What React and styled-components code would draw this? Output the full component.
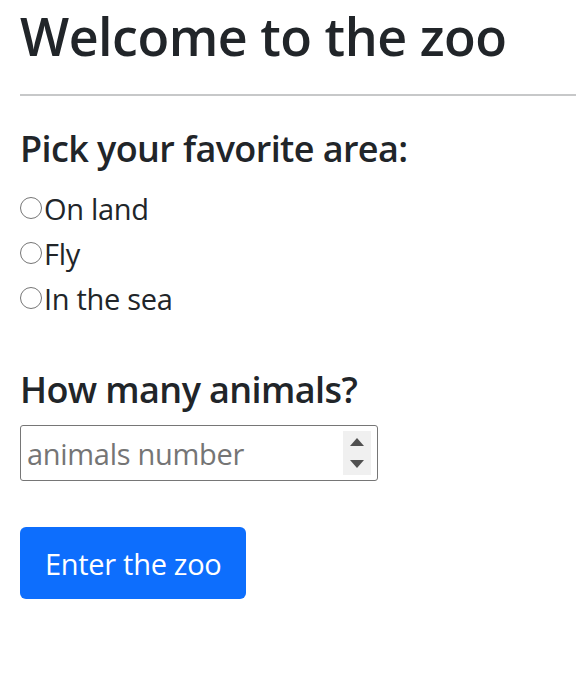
import styled, { createGlobalStyle } from "styled-components";

const GlobalStyle = createGlobalStyle`
  body {
    margin: 0;
    background: #fff;
    color: #212529;
    font-family: "Open Sans", "Noto Sans", sans-serif;
  }
`;

const Page = styled.div`
  padding: 0 0 40px 20px;
`;

const Title = styled.h1`
  margin: 0;
  padding-top: 5px;
  font-size: 52px;
  font-weight: 600;
  line-height: 62px;
  letter-spacing: -0.5px;
`;

const Rule = styled.hr`
  margin: 27px 0 28px;
  border: 0;
  border-top: 2px solid rgba(33, 37, 41, 0.25);
`;

const Question = styled.h3`
  margin: 0 0 ${({ $gap }) => $gap}px;
  font-size: 36px;
  font-weight: 600;
  line-height: 50px;
  letter-spacing: -0.6px;
`;

const Options = styled.div`
  display: flex;
  flex-direction: column;
  margin-bottom: 44px;
`;

const Option = styled.label`
  display: flex;
  align-items: center;
  height: 45px;
  font-size: 29px;
  letter-spacing: -0.3px;
`;

const Radio = styled.input.attrs({ type: "radio" })`
  appearance: none;
  box-sizing: border-box;
  width: 22px;
  height: 22px;
  margin: 0 2px 2px 0;
  border: 1.8px solid #767676;
  border-radius: 50%;
  background: #fff;
`;

const NumberBox = styled.div`
  display: flex;
  align-items: center;
  box-sizing: border-box;
  width: 358px;
  height: 56px;
  padding: 0 6px 0 6px;
  border: 1px solid #767676;
  border-radius: 3px;
`;

const NumberInput = styled.input.attrs({ type: "number" })`
  flex: 1;
  min-width: 0;
  border: 0;
  outline: none;
  padding: 0;
  font-family: inherit;
  font-size: 29px;
  letter-spacing: -0.3px;
  color: #212529;
  &::placeholder {
    color: #757575;
  }
  &::-webkit-inner-spin-button,
  &::-webkit-outer-spin-button {
    -webkit-appearance: none;
    margin: 0;
  }
`;

const Spinner = styled.div`
  display: flex;
  flex-direction: column;
  align-items: center;
  justify-content: space-around;
  width: 28px;
  height: 44px;
  background: #f0f0f0;
`;

const Arrow = styled.span`
  width: 0;
  height: 0;
  border-left: 7px solid transparent;
  border-right: 7px solid transparent;
  ${({ $down }) =>
    $down
      ? "border-top: 8px solid #505050;"
      : "border-bottom: 8px solid #505050;"}
`;

const Button = styled.button`
  display: block;
  margin-top: 46px;
  height: 72px;
  padding: 0 25px;
  border: 0;
  border-radius: 6px;
  background: #0d6efd;
  color: #fff;
  font-family: inherit;
  font-size: 29px;
  letter-spacing: -0.3px;
`;

export default function App() {
  return (
    <Page>
      <GlobalStyle />
      <Title>Welcome to the zoo</Title>
      <Rule />
      <Question $gap={12}>Pick your favorite area:</Question>
      <Options>
        {["On land", "Fly", "In the sea"].map((area) => (
          <Option key={area}>
            <Radio name="area" value={area} />
            {area}
          </Option>
        ))}
      </Options>
      <Question $gap={10}>How many animals?</Question>
      <NumberBox>
        <NumberInput placeholder="animals number" />
        <Spinner>
          <Arrow />
          <Arrow $down />
        </Spinner>
      </NumberBox>
      <Button>Enter the zoo</Button>
    </Page>
  );
}
